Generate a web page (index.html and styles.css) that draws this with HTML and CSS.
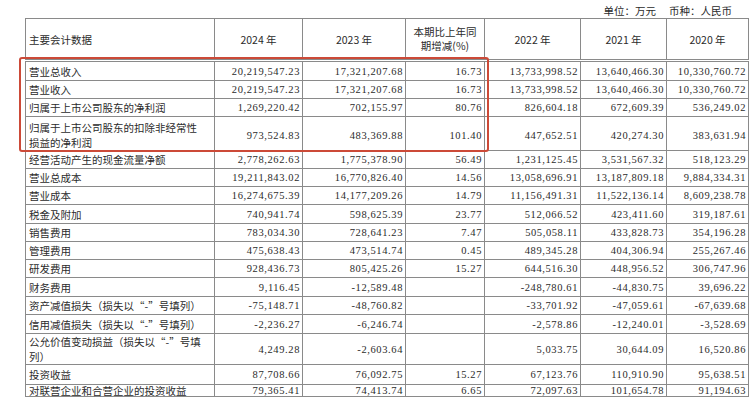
FILE: index.html
```html
<!DOCTYPE html>
<html lang="zh-CN">
<head>
<meta charset="utf-8">
<title>主要会计数据</title>
<link rel="stylesheet" href="styles.css">
</head>
<body>
<div class="page">
  <div class="unit"><span>单位：万元</span><span class="currency">币种：人民币</span></div>
  <div class="table-wrap">
    <table class="data">
      <colgroup>
        <col class="c-name"><col class="c-2024"><col class="c-2023"><col class="c-chg"><col class="c-2022"><col class="c-2021"><col class="c-2020">
      </colgroup>
      <thead>
        <tr class="head">
          <th class="name">主要会计数据</th>
          <th>2024 年</th>
          <th>2023 年</th>
          <th class="chg">本期比上年同<br>期增减(%)</th>
          <th>2022 年</th>
          <th>2021 年</th>
          <th>2020 年</th>
        </tr>
      </thead>
      <tbody>
        <tr class="first"><td>营业总收入</td><td class="num">20,219,547.23</td><td class="num">17,321,207.68</td><td class="num">16.73</td><td class="num">13,733,998.52</td><td class="num">13,640,466.30</td><td class="num">10,330,760.72</td></tr>
        <tr><td>营业收入</td><td class="num">20,219,547.23</td><td class="num">17,321,207.68</td><td class="num">16.73</td><td class="num">13,733,998.52</td><td class="num">13,640,466.30</td><td class="num">10,330,760.72</td></tr>
        <tr><td>归属于上市公司股东的净利润</td><td class="num">1,269,220.42</td><td class="num">702,155.97</td><td class="num">80.76</td><td class="num">826,604.18</td><td class="num">672,609.39</td><td class="num">536,249.02</td></tr>
        <tr class="tall"><td>归属于上市公司股东的扣除非经常性<br>损益的净利润</td><td class="num">973,524.83</td><td class="num">483,369.88</td><td class="num">101.40</td><td class="num">447,652.51</td><td class="num">420,274.30</td><td class="num">383,631.94</td></tr>
        <tr><td>经营活动产生的现金流量净额</td><td class="num">2,778,262.63</td><td class="num">1,775,378.90</td><td class="num">56.49</td><td class="num">1,231,125.45</td><td class="num">3,531,567.32</td><td class="num">518,123.29</td></tr>
        <tr><td>营业总成本</td><td class="num">19,211,843.02</td><td class="num">16,770,826.40</td><td class="num">14.56</td><td class="num">13,058,696.91</td><td class="num">13,187,809.18</td><td class="num">9,884,334.31</td></tr>
        <tr><td>营业成本</td><td class="num">16,274,675.39</td><td class="num">14,177,209.26</td><td class="num">14.79</td><td class="num">11,156,491.31</td><td class="num">11,522,136.14</td><td class="num">8,609,238.78</td></tr>
        <tr class="r19"><td>税金及附加</td><td class="num">740,941.74</td><td class="num">598,625.39</td><td class="num">23.77</td><td class="num">512,066.52</td><td class="num">423,411.60</td><td class="num">319,187.61</td></tr>
        <tr><td>销售费用</td><td class="num">783,034.30</td><td class="num">728,641.23</td><td class="num">7.47</td><td class="num">505,058.11</td><td class="num">433,828.73</td><td class="num">354,196.28</td></tr>
        <tr><td>管理费用</td><td class="num">475,638.43</td><td class="num">473,514.74</td><td class="num">0.45</td><td class="num">489,345.28</td><td class="num">404,306.94</td><td class="num">255,267.46</td></tr>
        <tr><td>研发费用</td><td class="num">928,436.73</td><td class="num">805,425.26</td><td class="num">15.27</td><td class="num">644,516.30</td><td class="num">448,956.52</td><td class="num">306,747.96</td></tr>
        <tr class="r19"><td>财务费用</td><td class="num">9,116.45</td><td class="num">-12,589.48</td><td class="num"></td><td class="num">-248,780.61</td><td class="num">-44,830.75</td><td class="num">39,696.22</td></tr>
        <tr><td>资产减值损失（损失以<span class="q">“</span>-<span class="q">”</span>号填列）</td><td class="num">-75,148.71</td><td class="num">-48,760.82</td><td class="num"></td><td class="num">-33,701.92</td><td class="num">-47,059.61</td><td class="num">-67,639.68</td></tr>
        <tr class="r19"><td>信用减值损失（损失以<span class="q">“</span>-<span class="q">”</span>号填列）</td><td class="num">-2,236.27</td><td class="num">-6,246.74</td><td class="num"></td><td class="num">-2,578.86</td><td class="num">-12,240.01</td><td class="num">-3,528.69</td></tr>
        <tr class="wrap"><td>公允价值变动损益（损失以<span class="q">“</span>-<span class="q">”</span>号填<br>列）</td><td class="num">4,249.28</td><td class="num">-2,603.64</td><td class="num"></td><td class="num">5,033.75</td><td class="num">30,644.09</td><td class="num">16,520.86</td></tr>
        <tr class="r20"><td>投资收益</td><td class="num">87,708.66</td><td class="num">76,092.75</td><td class="num">15.27</td><td class="num">67,123.76</td><td class="num">110,910.90</td><td class="num">95,638.51</td></tr>
        <tr class="last"><td>对联营企业和合营企业的投资收益</td><td class="num">79,365.41</td><td class="num">74,413.74</td><td class="num">6.65</td><td class="num">72,097.63</td><td class="num">101,654.78</td><td class="num">91,194.63</td></tr>
      </tbody>
    </table>
    <div class="highlight"></div>
  </div>
</div>
</body>
</html>
```
FILE: styles.css
```css
html, body {
  margin: 0;
  padding: 0;
  background: #ffffff;
}

body {
  font-family: "Noto Sans CJK SC", "Noto Sans", sans-serif;
  font-size: 10.5px;
  color: #2b2b2b;
}

.page {
  padding: 4px 8px 0 25px;
}

.unit {
  width: 723px;
  box-sizing: border-box;
  text-align: right;
  padding-right: 16px;
  line-height: 14px;
}

.unit .currency {
  margin-left: 13px;
}

.table-wrap {
  position: relative;
  width: 723px;
}

.data {
  border-collapse: collapse;
  table-layout: fixed;
  width: 723px;
}

.c-name { width: 189px; }
.c-2024 { width: 88px; }
.c-2023 { width: 103px; }
.c-chg { width: 79px; }
.c-2022 { width: 96px; }
.c-2021 { width: 86px; }
.c-2020 { width: 82px; }

.data th,
.data td {
  border: 1px solid #8a8a8a;
  padding: 0 3px;
  line-height: 15px;
  height: 17px;
  white-space: nowrap;
  vertical-align: middle;
}

.data th {
  font-weight: normal;
  text-align: center;
  height: 40px;
  border-bottom: 3px double #8a8a8a;
}

.data th.name {
  text-align: left;
}

.data th.chg {
  line-height: 14px;
}

.data td.num {
  text-align: right;
  font-family: "Liberation Serif", "Times New Roman", serif;
  letter-spacing: 0.6px;
  padding-right: 2px;
}

.q {
  font-family: "Noto Sans CJK JP", "Noto Sans CJK SC", sans-serif;
}

.data tr.first td { height: 18px; }
.data tr.r19 td { height: 18px; }
.data tr.r20 td { height: 19px; }
.data tr.tall td { height: 30px; padding-top: 3px; }
.data tr.wrap td { height: 30px; }
.data tr.last td { height: 11px; line-height: 11px; }

.highlight {
  position: absolute;
  left: -6px;
  top: 39px;
  width: 470px;
  height: 95px;
  box-sizing: border-box;
  border: 2px solid #cc4a38;
  border-radius: 3px;
  pointer-events: none;
}
```
